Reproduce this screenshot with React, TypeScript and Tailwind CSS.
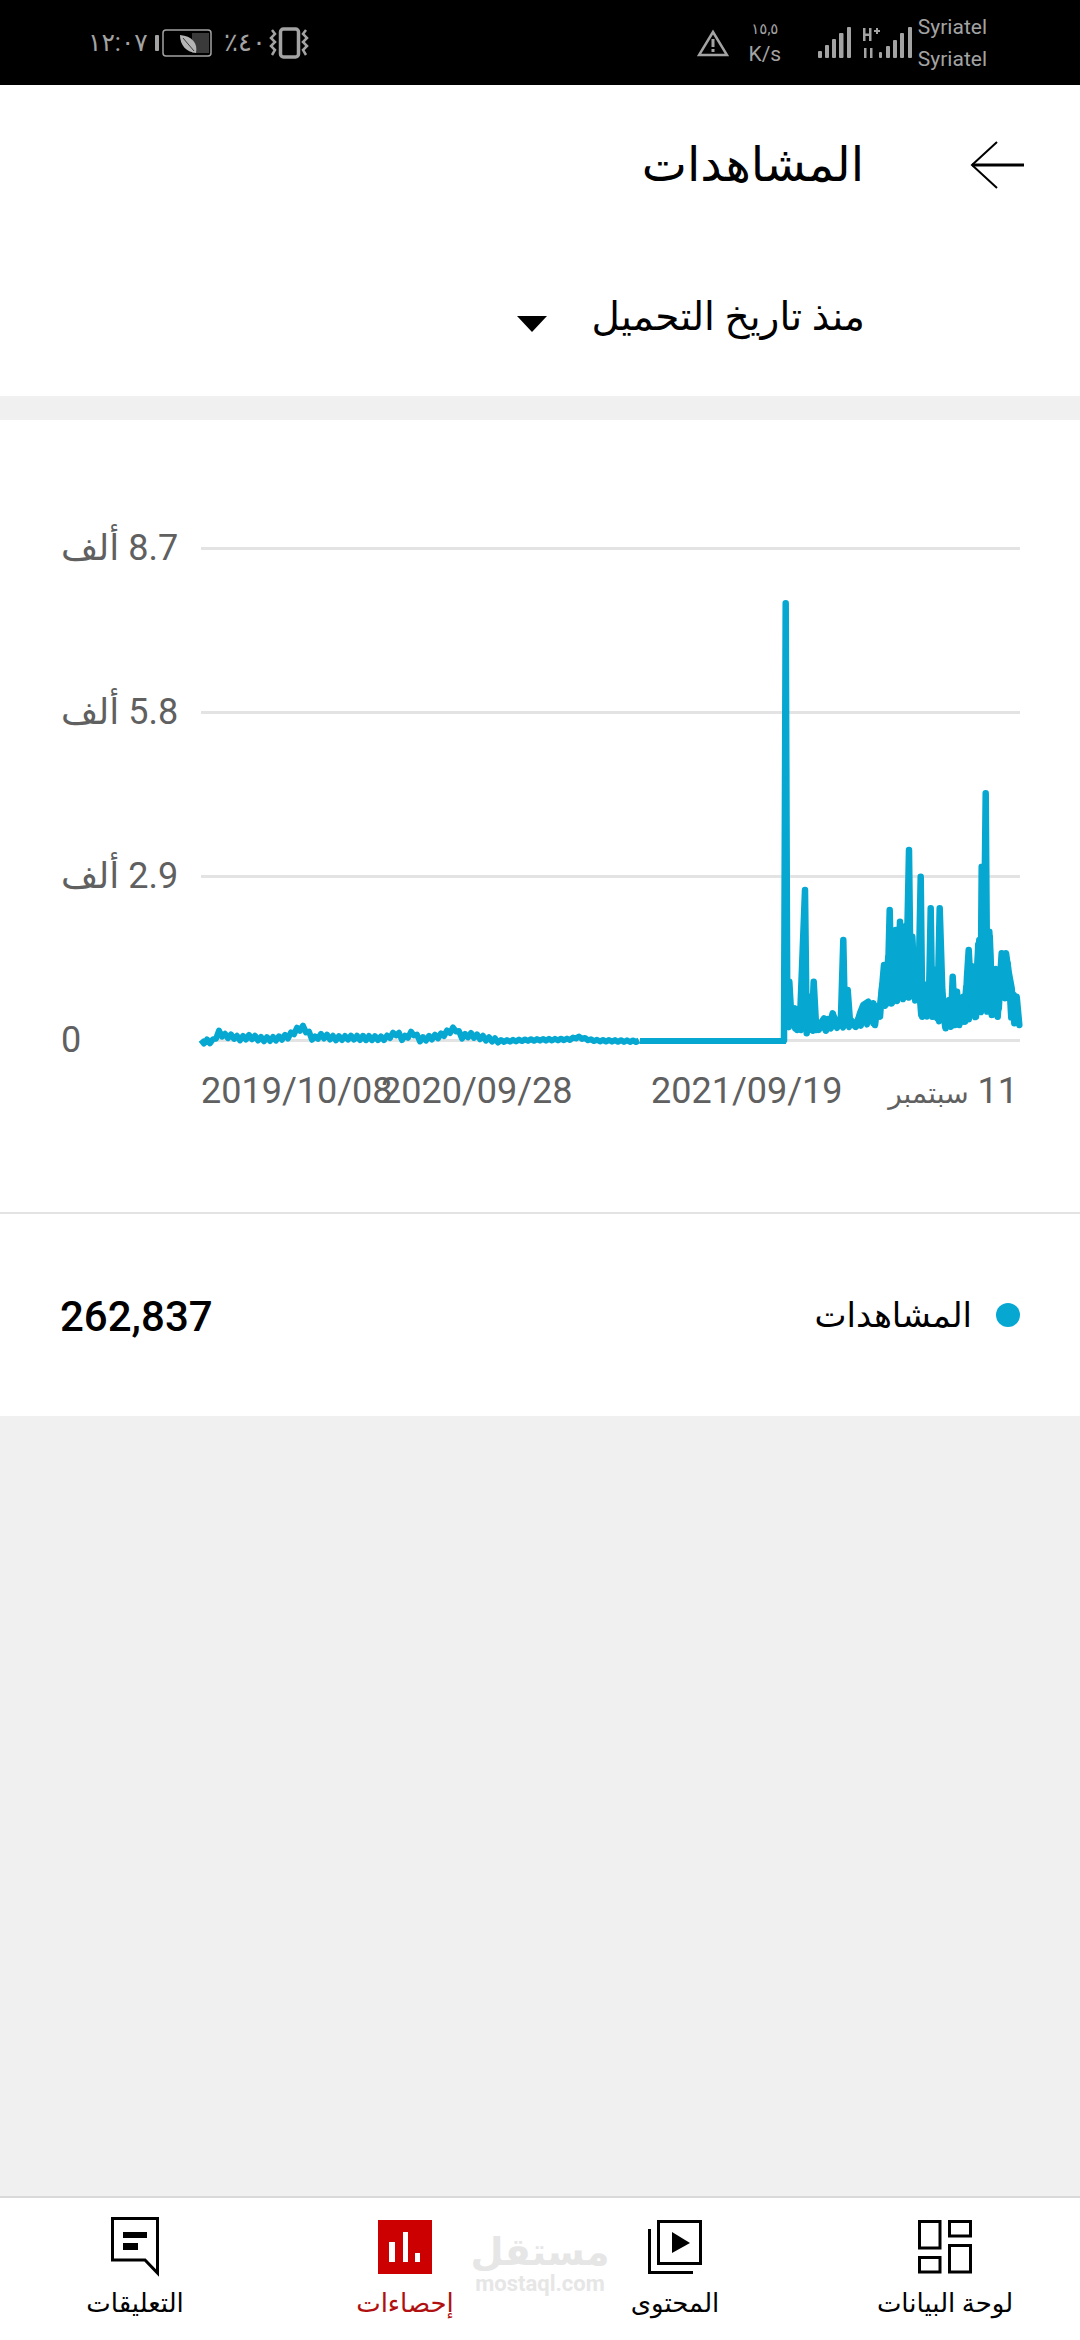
const rightPart: [number, number][] = [
  [252,1441],[257,130],[262,1380],[268,1265],[275,1390],[285,1345],[292,1410],[300,1380],[315,990],[320,1420],[328,1310],[335,1410],[341,1265],[349,1410],[360,1395],[372,1375],[378,1412],[390,1390],[398,1360],[410,1400],[422,1395],[430,1140],[435,1390],[443,1290],[450,1385],[468,1400],[480,1360],[490,1335],[505,1325],[512,1380],[520,1330],[525,1395],[532,1340],[540,1370],[548,1260],[552,1215],[555,1335],[562,1330],[569,1050],[575,1330],[581,1320],[587,1110],[592,1320],[600,1085],[607,1300],[612,1100],[618,1310],[627,870],[632,1300],[637,1130],[645,1300],[650,1170],[655,1320],[662,950],[667,1370],[674,1300],[680,1290],[686,1360],[692,1045],[697,1370],[706,1230],[712,1375],[719,1045],[727,1290],[737,1405],[748,1320],[752,1400],[758,1250],[765,1395],[771,1295],[778,1395],[790,1310],[795,1385],[801,1250],[806,1170],[813,1300],[820,1245],[828,1370],[833,1210],[838,1140],[842,1300],[845,920],[850,1345],[857,700],[862,1340],[868,1115],[875,1365],[884,1245],[893,1370],[905,1180],[910,1300],[918,1180],[925,1230],[935,1285],[943,1390],[950,1310],[958,1395],
];
const leftPart: [number, number][] = [
  [201,1041],[214,1041],[218,1032],[224,1036],[232,1037],[240,1039],[250,1037],[262,1039],[278,1038],[289,1036],[297,1030],[303,1028],[309,1034],[313,1040],[320,1036],[335,1038],[350,1037],[365,1038],[385,1039],[397,1033],[403,1039],[413,1032],[420,1039],[440,1036],[449,1032],[455,1029],[462,1037],[470,1035],[485,1038],[503,1041],[540,1040],[570,1039],[578,1037],[590,1040],[600,1041],[786,1041],
];
const topEnv: [number, number][] = [[258,1340],[300,1385],[350,1390],[400,1370],[470,1385],[500,1330],[540,1340],[550,1230],[590,1120],[620,1100],[640,1150],[660,1290],[700,1230],[720,1300],[740,1400],[760,1330],[790,1310],[810,1240],[835,1150],[870,1130],[880,1250],[900,1190],[920,1190],[945,1320],[958,1320]];
const botEnv: [number, number][] = [[258,1400],[320,1415],[400,1405],[470,1400],[520,1390],[550,1340],[600,1320],[640,1310],[665,1370],[700,1370],[740,1405],[790,1385],[830,1370],[850,1350],[890,1370],[910,1300],[940,1395],[958,1395]];

function lerp(env: [number, number][], x: number) {
  for (let i = 1; i < env.length; i++) {
    if (x <= env[i][0]) {
      const [x0, y0] = env[i - 1];
      const [x1, y1] = env[i];
      return y0 + ((y1 - y0) * (x - x0)) / (x1 - x0);
    }
  }
  return env[env.length - 1][1];
}
const fmt = (p: [number, number][]) => p.map(([x, y]) => `${x.toFixed(1)},${y.toFixed(1)}`).join(" ");

const spikes = fmt(rightPart.map(([x, y]) => [x / 3 + 700, y / 3 + 560]));
const bodyPts: [number, number][] = [];
for (let x = 258, i = 0; x <= 958; x += 9, i++) {
  const y = i % 2 === 0 ? lerp(topEnv, x) : lerp(botEnv, x);
  bodyPts.push([x / 3 + 700, y / 3 + 560]);
}
const body = fmt(bodyPts);
const noisePts: [number, number][] = [];
for (let x = 201, i = 0; x <= 640; x += 3, i++) {
  const amp = x < 500 ? 2.5 : 1;
  noisePts.push([x, lerp(leftPart, x) + (i % 2 === 0 ? -amp : amp) * (0.5 + 0.5 * Math.abs(Math.sin(i * 1.7)))]);
}
const noise = fmt(noisePts);
const flat = fmt(leftPart.slice(-1).concat([[640, 1041]]));

function GridRow({ label }: { label: string }) {
  return (
    <div className="flex h-[40px] items-center">
      <div className="w-[140px] text-left text-[36px] text-[#606060]" dir="rtl">{label}</div>
      <div className="h-[3px] flex-1 bg-[#e3e3e3]" />
    </div>
  );
}

function NavItem({ label, active, children }: { label: string; active?: boolean; children: React.ReactNode }) {
  return (
    <div className="flex flex-col items-center">
      <div className="flex h-[60px] items-center justify-center">{children}</div>
      <div className={`mt-[7px] text-[26px] leading-[38px] ${active ? "text-[#b01010]" : "text-black"}`}>{label}</div>
    </div>
  );
}

export default function App() {
  return (
    <div className="flex h-[2340px] w-[1080px] flex-col overflow-hidden bg-[#f0f0f0] font-['Roboto','DejaVu_Sans',sans-serif]">
      {/* Status bar */}
      <div className="flex h-[85px] shrink-0 items-center justify-between bg-black pl-[88px] pr-[93px] text-[#a3a3a3]" dir="ltr">
        <div className="flex items-center">
          <span className="w-[62px] text-[25px]">١٢:٠٧</span>
          <span className="ml-[5px] h-[16px] w-[4px] rounded-[1px] bg-[#a3a3a3]" />
          <svg width="50" height="28" viewBox="0 0 50 28" className="ml-[3px]">
            <rect x="1" y="1" width="48" height="26" rx="3" fill="none" stroke="#a3a3a3" strokeWidth="1.5" />
            <rect x="30" y="4" width="17" height="20" fill="#3a3a3a" />
            <path d="M18 6 C 30 7 36 14 34 24 C 24 23 18 16 18 6Z" fill="#b5b5b5" />
            <path d="M21 9 L32 22" stroke="#3a3a3a" strokeWidth="1" />
          </svg>
          <span className="ml-[12px] w-[44px] text-[26px]">٪٤٠</span>
          <svg width="40" height="32" viewBox="0 0 40 32" className="ml-[1px]" fill="none" stroke="#a3a3a3" strokeWidth="2.5">
            <rect x="11.5" y="2" width="18" height="28" rx="3" strokeWidth="3.5" />
            <path d="M3 3 l3 4 l-4 4 l4 4 l-4 4 l4 4 l-3 5 M37 3 l-3 4 l4 4 l-4 4 l4 4 l-4 4 l3 5" />
          </svg>
        </div>
        <div className="flex items-center">
          <svg width="32" height="28" viewBox="0 0 32 28" fill="none">
            <path d="M16 3 L30 26 H2 Z" stroke="#a3a3a3" strokeWidth="2.5" />
            <rect x="14.5" y="10" width="3" height="8" fill="#a3a3a3" />
            <rect x="14.5" y="20" width="3" height="3" fill="#a3a3a3" />
          </svg>
          <div className="ml-[18px] flex w-[36px] flex-col items-center">
            <span className="text-[15px] leading-[20px]">١٥,٥</span>
            <span className="mt-[3px] text-[21px] leading-[24px]">K/s</span>
          </div>
          <svg width="96" height="33" viewBox="0 0 96 33" className="ml-[34px]" fill="#a3a3a3">
            <rect x="1" y="25" width="4" height="7" rx="1" /><rect x="8" y="19" width="4" height="13" rx="1" /><rect x="15" y="13" width="4" height="19" rx="1" /><rect x="22" y="7" width="4.5" height="25" rx="1" /><rect x="30" y="1" width="4" height="31" rx="1" />
            <rect x="46" y="2" width="2.5" height="13" /><rect x="52" y="2" width="2.5" height="13" /><rect x="47" y="7.5" width="6" height="2.5" /><rect x="57" y="4" width="6" height="2" /><rect x="59" y="2" width="2" height="6" />
            <rect x="47" y="22" width="2.5" height="10" /><rect x="53" y="22" width="2.5" height="10" />
            <rect x="62" y="26" width="3" height="6" rx="1" /><rect x="69" y="20" width="4" height="12" rx="1" /><rect x="76" y="14" width="4" height="18" rx="1" /><rect x="83" y="7" width="4" height="25" rx="1" /><rect x="91" y="1" width="4" height="31" rx="1" />
          </svg>
          <div className="ml-[5px] flex flex-col text-[21px] leading-[32px]">
            <span>Syriatel</span>
            <span>Syriatel</span>
          </div>
        </div>
      </div>

      {/* Header */}
      <div className="flex h-[311px] shrink-0 flex-col bg-white" dir="rtl">
        <div className="mt-[25px] flex h-[110px] items-center gap-[106px] pr-[56px]">
          <svg width="54" height="50" viewBox="0 0 54 50" fill="none" stroke="#000">
            <path d="M2 25 H54" strokeWidth="3" />
            <path d="M27 2 L2 25 L27 48" strokeWidth="2" />
          </svg>
          <h1 className="text-[48px] font-normal leading-[60px] text-black">المشاهدات</h1>
        </div>
        <div className="mt-[72px] flex items-center pr-[215px]">
          <span className="text-[39px] leading-[50px] text-black">منذ تاريخ التحميل</span>
          <span className="mr-[44px] mt-[14px] h-0 w-0 border-x-[15px] border-t-[16px] border-x-transparent border-t-black" />
        </div>
      </div>

      <div className="h-[24px] shrink-0" />

      {/* Chart */}
      <div className="relative flex h-[792px] shrink-0 flex-col bg-white pl-[61px] pr-[60px] pt-[108px]">
        <div className="flex flex-col gap-[124px]">
          <GridRow label="8.7 ألف" />
          <GridRow label="5.8 ألف" />
          <GridRow label="2.9 ألف" />
          <div className="flex h-[40px] items-center">
            <div className="w-[140px] text-[36px] text-[#606060]">0</div>
            <div className="h-[3px] flex-1 bg-[#e3e3e3]" />
          </div>
        </div>
        <div className="mt-[11px] flex whitespace-nowrap pl-[140px] text-[36px] leading-[41px] text-[#606060]">
          <span className="w-[180px]">2019/10/08</span>
          <span className="w-[270px]">2020/09/28</span>
          <span className="w-[231px]">2021/09/19</span>
          <span className="w-[136px] text-right" dir="rtl">11 <span className="text-[28px]">سبتمبر</span></span>
        </div>
        <svg className="absolute left-0 top-[-420px]" width="1080" height="1212" viewBox="0 0 1080 1212" fill="none">
          <polyline points={noise} stroke="#06a8d1" strokeWidth="6" strokeLinejoin="round" />
          <polyline points={flat} stroke="#06a8d1" strokeWidth="6" />
          <polyline points={body} stroke="#06a8d1" strokeWidth="6" strokeLinejoin="round" />
          <polyline points={spikes} stroke="#06a8d1" strokeWidth="6.5" strokeLinejoin="round" strokeLinecap="round" />
        </svg>
      </div>

      {/* Total row */}
      <div className="flex h-[204px] shrink-0 items-center justify-between border-t-[2px] border-[#e3e3e3] bg-white pl-[60px] pr-[60px]">
        <span className="mt-[4px] text-[42px] font-medium leading-none text-black">262,837</span>
        <div className="flex items-center gap-[24px]" dir="rtl">
          <span className="h-[24px] w-[24px] rounded-full bg-[#06a8d1]" />
          <span className="text-[34px] text-black">المشاهدات</span>
        </div>
      </div>

      <div className="flex-1" />

      {/* Bottom nav */}
      <div className="relative grid h-[144px] shrink-0 grid-cols-4 border-t-[2px] border-[#d9d9d9] bg-white pt-[19px]" dir="rtl">
        <NavItem label="لوحة البيانات">
          <svg width="54" height="54" viewBox="0 0 54 54" fill="none" stroke="#000" strokeWidth="3">
            <rect x="1.5" y="1.5" width="20.5" height="26.5" />
            <rect x="31.5" y="1.5" width="21" height="14.5" />
            <rect x="1.5" y="37.5" width="20.5" height="14.5" />
            <rect x="31.5" y="25.5" width="21" height="26.5" />
          </svg>
        </NavItem>
        <NavItem label="المحتوى">
          <svg width="54" height="54" viewBox="0 0 54 54" fill="none" stroke="#000" strokeWidth="3">
            <rect x="10.5" y="1.5" width="42" height="42" />
            <path d="M1.5 9 V52.5 H45" />
            <path d="M24 12 L42 23 L24 33 Z" fill="#000" stroke="none" />
          </svg>
        </NavItem>
        <NavItem label="إحصاءات" active>
          <svg width="54" height="54" viewBox="0 0 54 54">
            <rect width="54" height="54" fill="#cc0000" />
            <rect x="11" y="22" width="6" height="20" fill="#fff" />
            <rect x="25" y="12" width="5" height="30" fill="#fff" />
            <rect x="37" y="33" width="5" height="9" fill="#fff" />
          </svg>
        </NavItem>
        <NavItem label="التعليقات">
          <svg width="48" height="60" viewBox="0 0 48 60" fill="none">
            <path d="M1.5 1.5 H46.5 V56 L34 43 H1.5 Z" stroke="#000" strokeWidth="3" />
            <rect x="12" y="15" width="24" height="6" fill="#000" />
            <rect x="12" y="26" width="15" height="7" fill="#000" />
          </svg>
        </NavItem>
        <div className="absolute left-[474px] top-[32px] flex w-[132px] flex-col items-center text-[#e6e6e6]" dir="rtl">
          <span className="text-[38px] font-bold leading-[44px]">مستقل</span>
          <span className="text-[22px] font-bold leading-[20px]" dir="ltr">mostaql.com</span>
        </div>
      </div>
    </div>
  );
}
